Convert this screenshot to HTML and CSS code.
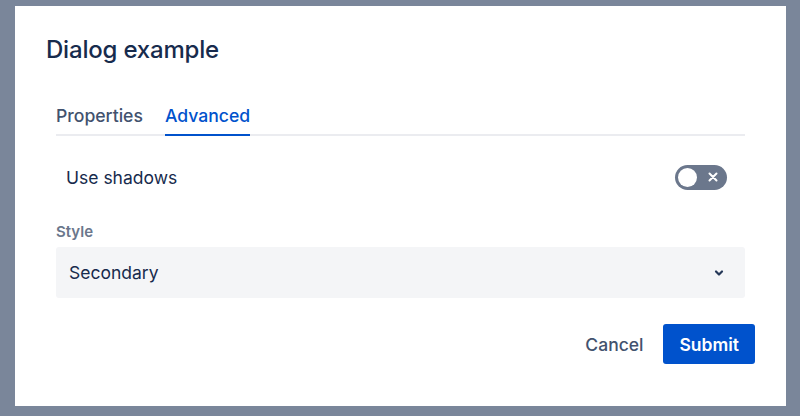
FILE: index.html
```html
<!DOCTYPE html>
<html>
<head>
<meta charset="utf-8">
<link rel="stylesheet" href="styles.css">
</head>
<body>
<div class="dialog">
  <h1 class="title">Dialog example</h1>
  <div class="body">
    <div class="tabs">
      <div class="tab">Properties</div>
      <div class="tab active">Advanced</div>
    </div>
    <div class="row">
      <span class="row-label">Use shadows</span>
      <span class="toggle">
        <span class="knob"></span>
        <svg class="x" width="10" height="10" viewBox="0 0 10 10"><path d="M1.5 1.5 L8.5 8.5 M8.5 1.5 L1.5 8.5" stroke="#fff" stroke-width="2" stroke-linecap="round"/></svg>
      </span>
    </div>
    <div class="field">
      <div class="label">Style</div>
      <div class="select">
        <span>Secondary</span>
        <svg width="12" height="12" viewBox="0 0 12 12"><path d="M3 4.5 L6 7.5 L9 4.5" fill="none" stroke="#253858" stroke-width="2.2" stroke-linecap="round" stroke-linejoin="round"/></svg>
      </div>
    </div>
  </div>
  <div class="footer">
    <button class="btn subtle">Cancel</button>
    <button class="btn primary">Submit</button>
  </div>
</div>
</body>
</html>
```

FILE: styles.css
```css
html, body {
  margin: 0;
  padding: 0;
}
body {
  background: #7a869a;
  width: 800px;
  height: 416px;
  overflow: hidden;
  font-family: Inter, "Noto Sans", sans-serif;
  padding-top: 6px;
  padding-left: 15px;
  box-sizing: border-box;
}
.dialog {
  width: 771px;
  height: 400px;
  background: #fff;
  box-sizing: border-box;
  display: flex;
  flex-direction: column;
}
.title {
  margin: 0;
  padding: 28px 31px 0 31px;
  font-size: 24px;
  font-weight: 500;
  line-height: 32px;
  color: #172b4d;
  letter-spacing: -0.2px;
}
.body {
  padding: 0 41px;
}
.tabs {
  display: flex;
  gap: 22px;
  margin-top: 37px;
  border-bottom: 2px solid #ebecf0;
}
.tab {
  font-size: 17.6px;
  font-weight: 500;
  color: #42526e;
  line-height: 25px;
  padding-bottom: 6px;
  margin-bottom: -2px;
  border-bottom: 2px solid transparent;
}
.tab.active {
  color: #0052cc;
  border-bottom-color: #0052cc;
}
.row {
  display: flex;
  align-items: center;
  justify-content: space-between;
  padding: 0 18px 0 10px;
  margin-top: 28px;
  height: 26px;
}
.row-label {
  font-size: 17.5px;
  color: #172b4d;
}
.toggle {
  width: 52px;
  height: 25px;
  border-radius: 13px;
  background: #6b778c;
  display: flex;
  align-items: center;
  justify-content: space-between;
  padding: 0 9px 0 3px;
  box-sizing: border-box;
}
.knob {
  width: 19px;
  height: 19px;
  border-radius: 50%;
  background: #fff;
}
.field {
  margin-top: 33px;
}
.label {
  font-size: 15px;
  font-weight: 600;
  color: #6b778c;
  line-height: 18px;
}
.select {
  margin-top: 6px;
  height: 51px;
  background: #f4f5f7;
  border-radius: 3px;
  display: flex;
  align-items: center;
  justify-content: space-between;
  padding: 0 20px 0 13px;
  font-size: 17.5px;
  color: #172b4d;
}
.footer {
  display: flex;
  justify-content: flex-end;
  align-items: center;
  gap: 4px;
  padding: 26px 31px 0;
}
.btn {
  font-family: inherit;
  font-size: 17.5px;
  font-weight: 500;
  height: 40px;
  border: none;
  border-radius: 3px;
  padding: 0 16px;
  cursor: pointer;
}
.btn.subtle {
  background: transparent;
  color: #42526e;
}
.btn.primary {
  background: #0052cc;
  color: #fff;
  font-weight: 600;
}
```
